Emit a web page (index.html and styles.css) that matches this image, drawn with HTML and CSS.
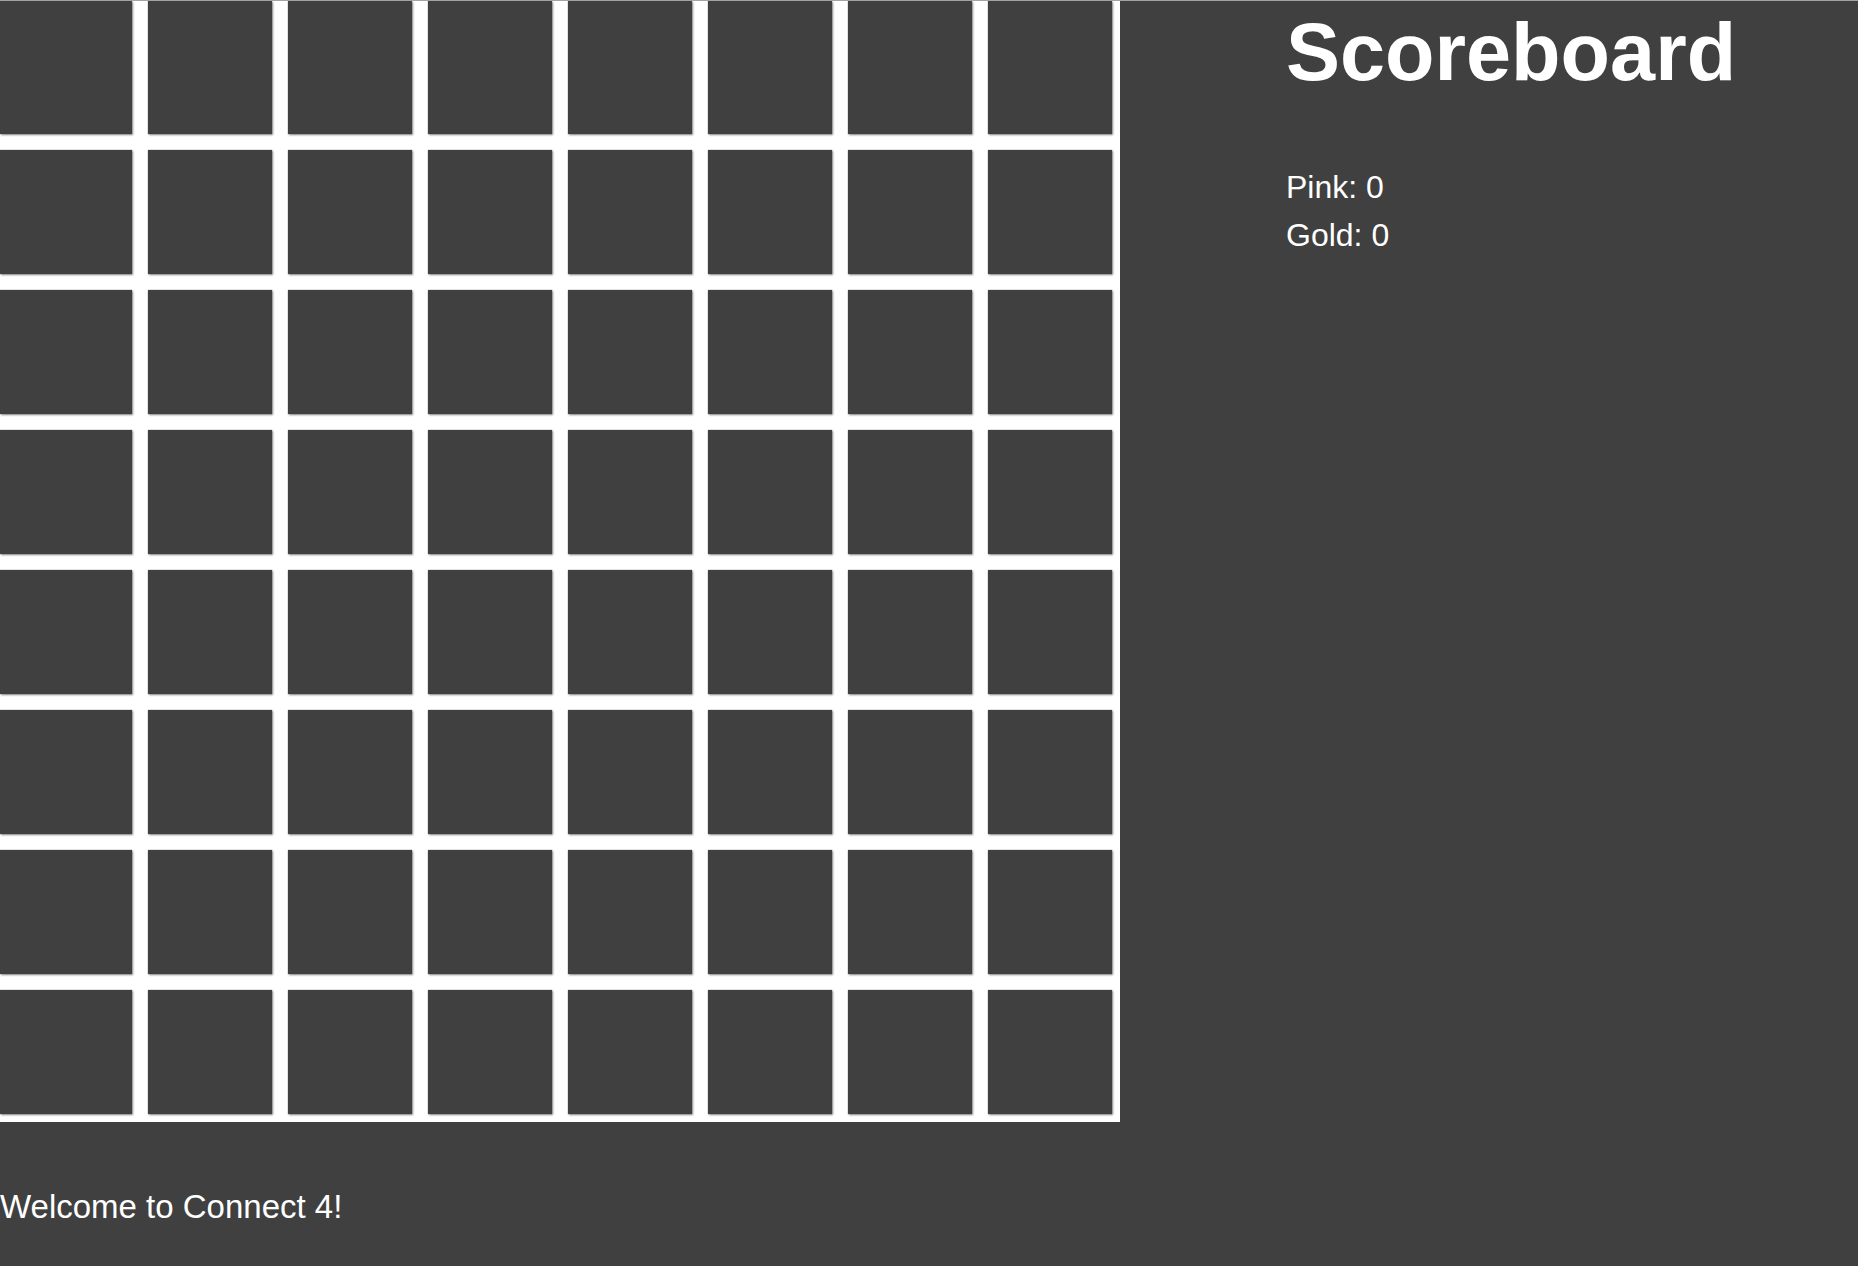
FILE: index.html
```html
<!DOCTYPE html>
<html lang="en">
<head>
<meta charset="utf-8">
<title>Connect 4</title>
<link rel="stylesheet" href="styles.css">
</head>
<body>
<div class="page">
  <div class="top">
    <div class="board">
      <div class="cell"></div><div class="cell"></div><div class="cell"></div><div class="cell"></div><div class="cell"></div><div class="cell"></div><div class="cell"></div><div class="cell"></div>
      <div class="cell"></div><div class="cell"></div><div class="cell"></div><div class="cell"></div><div class="cell"></div><div class="cell"></div><div class="cell"></div><div class="cell"></div>
      <div class="cell"></div><div class="cell"></div><div class="cell"></div><div class="cell"></div><div class="cell"></div><div class="cell"></div><div class="cell"></div><div class="cell"></div>
      <div class="cell"></div><div class="cell"></div><div class="cell"></div><div class="cell"></div><div class="cell"></div><div class="cell"></div><div class="cell"></div><div class="cell"></div>
      <div class="cell"></div><div class="cell"></div><div class="cell"></div><div class="cell"></div><div class="cell"></div><div class="cell"></div><div class="cell"></div><div class="cell"></div>
      <div class="cell"></div><div class="cell"></div><div class="cell"></div><div class="cell"></div><div class="cell"></div><div class="cell"></div><div class="cell"></div><div class="cell"></div>
      <div class="cell"></div><div class="cell"></div><div class="cell"></div><div class="cell"></div><div class="cell"></div><div class="cell"></div><div class="cell"></div><div class="cell"></div>
      <div class="cell"></div><div class="cell"></div><div class="cell"></div><div class="cell"></div><div class="cell"></div><div class="cell"></div><div class="cell"></div><div class="cell"></div>
    </div>
    <div class="scoreboard">
      <h1 class="score-title">Scoreboard</h1>
      <div class="scores">
        <div class="score">Pink: 0</div>
        <div class="score">Gold: 0</div>
      </div>
    </div>
  </div>
  <p class="message">Welcome to Connect 4!</p>
</div>
</body>
</html>
```

FILE: styles.css
```css
html, body {
  margin: 0;
  padding: 0;
}

body {
  background: #404040;
  color: #ffffff;
  font-family: "Liberation Sans", Arial, Helvetica, sans-serif;
  height: 1266px;
  overflow: hidden;
  box-sizing: border-box;
  border-top: 1px solid #a3a3a3;
}

.page {
  display: flex;
  flex-direction: column;
}

.top {
  display: flex;
  align-items: flex-start;
  gap: 166px;
}

.board {
  display: grid;
  grid-template-columns: 132px repeat(7, 124px);
  grid-template-rows: 133px repeat(7, 124px);
  gap: 16px;
  padding: 0 8px 8px 0;
  background: #ffffff;
}

.cell {
  background: #404040;
  box-shadow: 1px 1px 2px rgba(0, 0, 0, 0.45), 0 0 1px rgba(0, 0, 0, 0.5);
}

.scoreboard {
  display: flex;
  flex-direction: column;
}

.score-title {
  margin: 11px 0 0 0;
  font-size: 81px;
  line-height: 81px;
  font-weight: bold;
}

.scores {
  margin-top: 70px;
  font-size: 32px;
  line-height: 48px;
}

.message {
  margin: 61px 0 0 0;
  font-size: 33px;
  line-height: 48px;
}
```
